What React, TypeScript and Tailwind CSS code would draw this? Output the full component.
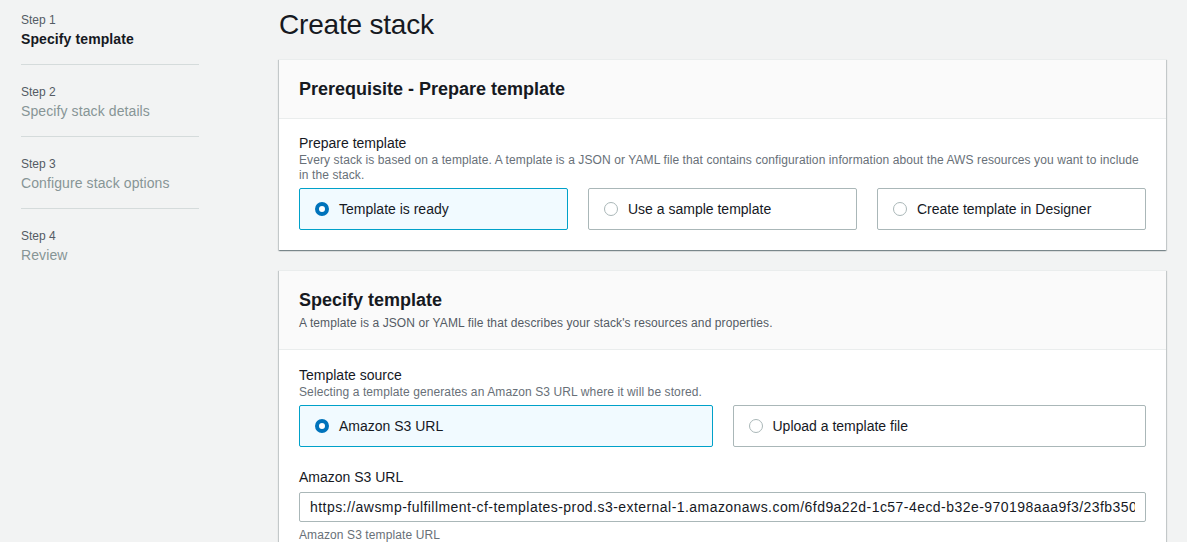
import { useState } from "react";

const steps = [
  { label: "Step 1", title: "Specify template" },
  { label: "Step 2", title: "Specify stack details" },
  { label: "Step 3", title: "Configure stack options" },
  { label: "Step 4", title: "Review" },
];

function Radio({ checked }: { checked: boolean }) {
  return checked ? (
    <span className="block h-[14px] w-[14px] shrink-0 rounded-full border-[4px] border-[#0073bb] bg-white" />
  ) : (
    <span className="block h-[14px] w-[14px] shrink-0 rounded-full border border-[#aab7b8] bg-white" />
  );
}

function Tile({
  label,
  checked,
  onClick,
}: {
  label: string;
  checked: boolean;
  onClick: () => void;
}) {
  return (
    <button
      type="button"
      onClick={onClick}
      className={
        checked
          ? "flex h-[42px] items-center gap-[10px] rounded-[2px] border border-[#00a1c9] bg-[#f1faff] pl-[15px] text-left text-[14px] text-[#16191f]"
          : "flex h-[42px] items-center gap-[10px] rounded-[2px] border border-[#aab7b8] bg-white pl-[15px] text-left text-[14px] text-[#16191f]"
      }
    >
      <Radio checked={checked} />
      <span>{label}</span>
    </button>
  );
}

function Card({
  title,
  description,
  children,
}: {
  title: string;
  description?: string;
  children: React.ReactNode;
}) {
  return (
    <section className="border-t border-[#eaeded] bg-white shadow-[0_1px_1px_0_rgba(0,28,36,0.3),1px_1px_1px_0_rgba(0,28,36,0.15),-1px_1px_1px_0_rgba(0,28,36,0.15)]">
      <header className="border-b border-[#eaeded] bg-[#fafafa] px-5 py-[18px]">
        <h2 className="text-[18px] font-bold leading-[22px] text-[#16191f]">
          {title}
        </h2>
        {description ? (
          <p className="mt-[4px] text-[12px] leading-[16px] tracking-[0.1px] text-[#545b64]">
            {description}
          </p>
        ) : null}
      </header>
      <div className="px-5 pb-5">{children}</div>
    </section>
  );
}

export default function App() {
  const [prep, setPrep] = useState(0);
  const [source, setSource] = useState(0);

  return (
    <div className="flex min-h-screen bg-[#f2f3f3] font-['Liberation_Sans',Arial,sans-serif] text-[#16191f]">
      <nav className="w-[279px] shrink-0 pl-[21px] pt-[12px]">
        <ul className="w-[178px]">
          {steps.map((s, i) => (
            <li
              key={s.label}
              className={
                i === 0
                  ? "border-b border-[#d5dbdb] pb-[15px]"
                  : i === steps.length - 1
                    ? "pt-[19px]"
                    : "border-b border-[#d5dbdb] pt-[19px] pb-[15px]"
              }
            >
              <div className="text-[12px] leading-[16px] text-[#545b64]">
                {s.label}
              </div>
              <div
                className={
                  i === 0
                    ? "mt-[1px] text-[14px] font-bold leading-[20px] tracking-[0.1px] text-[#16191f]"
                    : "mt-[1px] text-[14px] leading-[20px] tracking-[0.1px] text-[#879596]"
                }
              >
                {s.title}
              </div>
            </li>
          ))}
        </ul>
      </nav>

      <main className="flex-1 pr-[21px]">
        <h1 className="pt-[7px] text-[28px] leading-[36px] tracking-[-0.2px] text-[#16191f]">
          Create stack
        </h1>

        <div className="mt-[16px] flex flex-col gap-5">
          <Card title="Prerequisite - Prepare template">
            <div className="pt-[14px]">
              <div className="text-[14px] leading-[20px]">Prepare template</div>
              <p className="text-[12px] leading-[15px] tracking-[0.1px] text-[#687078]">
                Every stack is based on a template. A template is a JSON or YAML
                file that contains configuration information about the AWS
                resources you want to include in the stack.
              </p>
              <div className="mt-[5px] grid grid-cols-3 gap-5">
                {["Template is ready", "Use a sample template", "Create template in Designer"].map(
                  (t, i) => (
                    <Tile key={t} label={t} checked={prep === i} onClick={() => setPrep(i)} />
                  )
                )}
              </div>
            </div>
          </Card>

          <Card
            title="Specify template"
            description="A template is a JSON or YAML file that describes your stack's resources and properties."
          >
            <div className="pt-[15px]">
              <div className="text-[14px] leading-[20px]">Template source</div>
              <p className="text-[12px] leading-[15px] tracking-[0.1px] text-[#687078]">
                Selecting a template generates an Amazon S3 URL where it will be
                stored.
              </p>
              <div className="mt-[5px] grid grid-cols-2 gap-5">
                {["Amazon S3 URL", "Upload a template file"].map((t, i) => (
                  <Tile key={t} label={t} checked={source === i} onClick={() => setSource(i)} />
                ))}
              </div>

              <div className="mt-[20px] text-[14px] leading-[20px]">Amazon S3 URL</div>
              <input
                readOnly
                value="https://awsmp-fulfillment-cf-templates-prod.s3-external-1.amazonaws.com/6fd9a22d-1c57-4ecd-b32e-970198aaa9f3/23fb3507-template.yaml"
                className="mt-[5px] block h-[30px] w-full rounded-[2px] border border-[#aab7b8] bg-white px-[10px] text-[14px] tracking-[0.45px] text-[#16191f] outline-none"
              />
              <p className="mt-[5px] text-[12px] leading-[16px] tracking-[0.1px] text-[#687078]">
                Amazon S3 template URL
              </p>
            </div>
          </Card>
        </div>
      </main>
    </div>
  );
}
